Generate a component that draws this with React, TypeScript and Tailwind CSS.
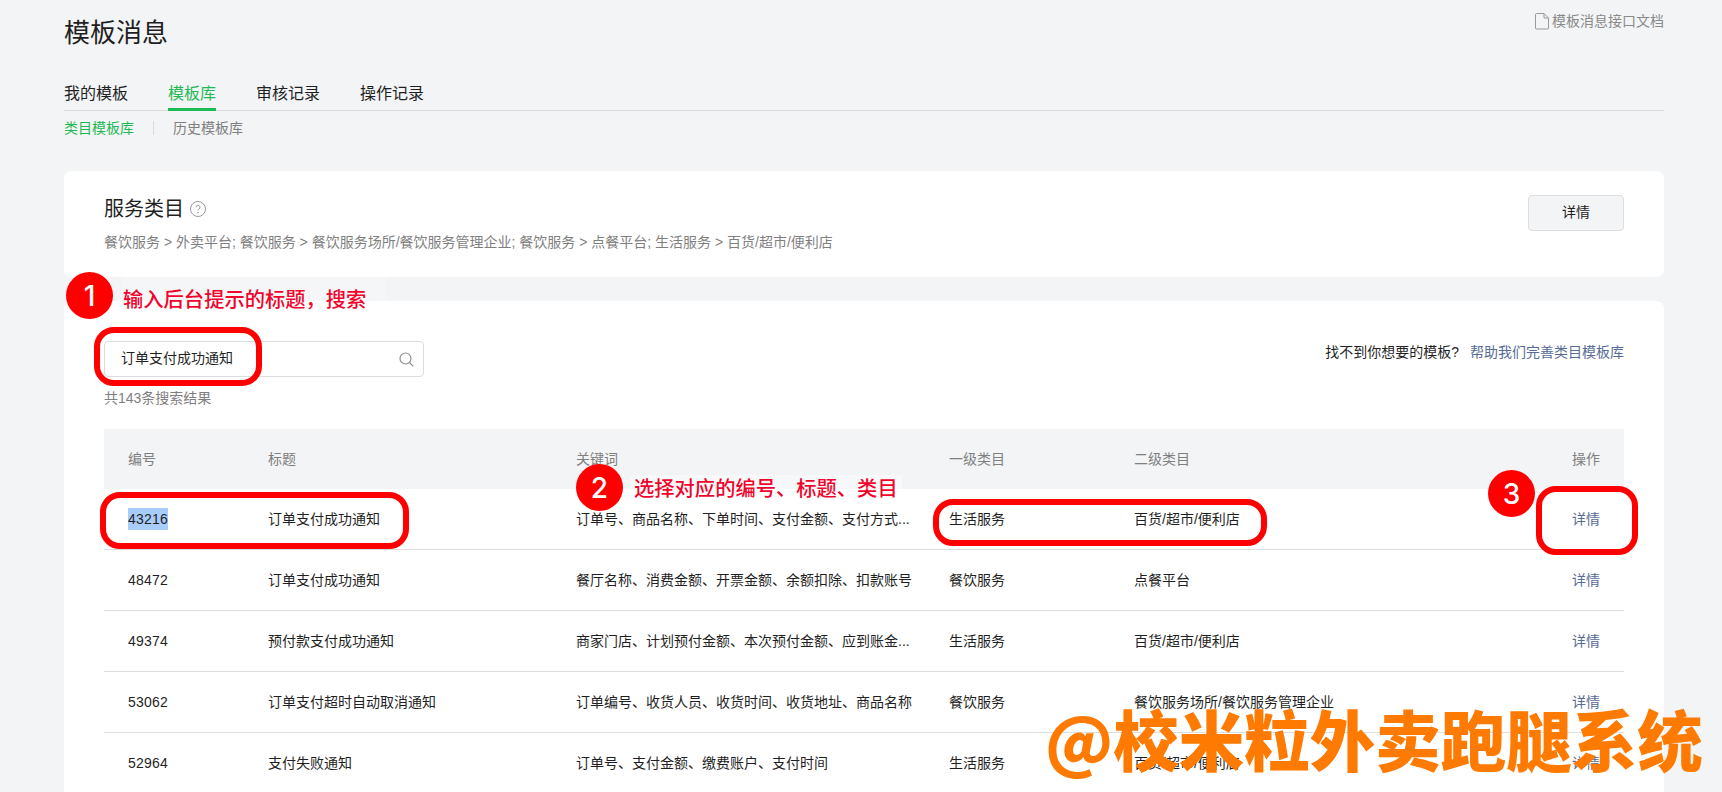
const FONT = { fontFamily: '"Liberation Sans", "Noto Sans CJK SC", sans-serif' };
const CJK = { fontFamily: '"Noto Sans CJK SC", "Noto Sans", sans-serif' };

const rows = [
  ["43216", "订单支付成功通知", "订单号、商品名称、下单时间、支付金额、支付方式...", "生活服务", "百货/超市/便利店"],
  ["48472", "订单支付成功通知", "餐厅名称、消费金额、开票金额、余额扣除、扣款账号", "餐饮服务", "点餐平台"],
  ["49374", "预付款支付成功通知", "商家门店、计划预付金额、本次预付金额、应到账金...", "生活服务", "百货/超市/便利店"],
  ["53062", "订单支付超时自动取消通知", "订单编号、收货人员、收货时间、收货地址、商品名称", "餐饮服务", "餐饮服务场所/餐饮服务管理企业"],
  ["52964", "支付失败通知", "订单号、支付金额、缴费账户、支付时间", "生活服务", "百货/超市/便利店"],
];

function Circle({ n, cls }: { n: string; cls: string }) {
  return (
    <div style={{ fontFamily: "Inter, sans-serif" }} className={`absolute w-[47px] h-[47px] rounded-full bg-[#fe0000] text-white flex items-center justify-center text-[28px] font-medium leading-none ${cls}`}>
      {n}
    </div>
  );
}

function Box({ cls }: { cls: string }) {
  return <div className={`absolute border-[6px] border-[#fe0000] ${cls}`} />;
}

export default function App() {
  return (
    <div style={FONT} className="relative h-[792px] overflow-hidden bg-[#f3f4f6] pl-16 pr-[58px] text-[14px] leading-5 text-[#1f1f1f]">
      <div className="flex h-[70px] justify-between">
        <h1 className="pt-[15px] text-[26px] leading-9 font-normal">模板消息</h1>
        <a className="flex h-4 mt-[13px] items-center gap-[3px] text-[#8a8a8a]">
          <svg width="14" height="17" viewBox="0 0 14 17" fill="none" stroke="#9a9a9a" strokeWidth="1">
            <path d="M1.5.5h7.5l4.500 4.500v10a1 1 0 0 1-1 1h-11a1 1 0 0 1-1-1v-13.500a1 1 0 0 1 1-1z" />
            <path d="M9 .5v4.500h4.500" />
          </svg>
          <span className="-mt-px">模板消息接口文档</span>
        </a>
      </div>

      <div className="flex h-[41px] gap-10 border-b border-[#d9dadc] text-[16px] leading-6">
        <span className="pt-[12px]">我的模板</span>
        <span className="h-[41px] pt-[12px] text-[#1fb955] border-b-[3px] border-[#1fb955]">模板库</span>
        <span className="pt-[12px]">审核记录</span>
        <span className="pt-[12px]">操作记录</span>
      </div>

      <div className="flex h-9 items-center pb-[2px] text-[#7f7f7f]">
        <span className="text-[#1fb955]">类目模板库</span>
        <span className="mx-[19px] h-[14px] w-px bg-[#d9dadc]" />
        <span>历史模板库</span>
      </div>

      <section className="mt-6 flex h-[106px] justify-between rounded-lg bg-white px-10 pt-6">
        <div>
          <div className="flex h-7 items-center gap-[6px] text-[20px] leading-7">
            <span className="-mt-px">服务类目</span>
            <svg width="16" height="16" viewBox="0 0 16 16" fill="none" stroke="#9a9a9a">
              <circle cx="8" cy="8" r="7.500" />
              <path d="M6 6.300a2 2 0 1 1 3 1.700c-.7.400-1 .8-1 1.600" />
              <circle cx="8" cy="11.700" r=".4" />
            </svg>
          </div>
          <p className="mt-[9px] text-[#7f7f7f]">餐饮服务 &gt; 外卖平台; 餐饮服务 &gt; 餐饮服务场所/餐饮服务管理企业; 餐饮服务 &gt; 点餐平台; 生活服务 &gt; 百货/超市/便利店</p>
        </div>
        <button className="h-9 w-24 rounded border border-[#dcdddf] bg-[#f3f4f6] pb-[2px] text-[#1f1f1f]">详情</button>
      </section>

      <section className="mt-6 h-[600px] rounded-lg bg-white px-10 pt-10">
        <div className="flex justify-between">
          <div className="flex h-9 w-[320px] items-center justify-between rounded border border-[#dcdddf] pl-4 pr-[9px]">
            <span className="-mt-[2px]">订单支付成功通知</span>
            <svg width="15" height="15" viewBox="0 0 15 15" fill="none" stroke="#8f8f8f" strokeWidth="1.200">
              <circle cx="6.500" cy="6.500" r="5.500" />
              <path d="M10.500 10.500l3.800 3.800" />
            </svg>
          </div>
          <div className="mt-px flex h-5 gap-[11px]">
            <span>找不到你想要的模板?</span>
            <a className="text-[#576b95]">帮助我们完善类目模板库</a>
          </div>
        </div>
        <p className="mt-[11px] text-[#7f7f7f]">共143条搜索结果</p>

        <div className="mt-[21px]">
          <div className="grid h-[60px] grid-cols-[140px_308px_373px_185px_1fr_52px] items-center bg-[#f3f4f6] pl-6 text-[#7f7f7f]">
            <span>编号</span>
            <span>标题</span>
            <span>关键词</span>
            <span>一级类目</span>
            <span>二级类目</span>
            <span>操作</span>
          </div>
          {rows.map((r, i) => (
            <div key={r[0]} className="grid h-[61px] grid-cols-[140px_308px_373px_185px_1fr_52px] items-center border-b border-[#dcdddf] pl-6">
              <span>{i === 0 ? <span className="bg-[#a8cdfb] py-[3px] tracking-[.2px]">{r[0]}</span> : <span className="tracking-[.2px]">{r[0]}</span>}</span>
              <span>{r[1]}</span>
              <span className="whitespace-nowrap">{r[2]}</span>
              <span>{r[3]}</span>
              <span>{r[4]}</span>
              <a className="text-[#576b95]">详情</a>
            </div>
          ))}
        </div>
      </section>

      <div className="absolute left-[123px] top-[277px] h-6 w-[264px] bg-[#f5f6f7]" />
      <div className="absolute left-[630px] top-[475px] h-[14px] w-[272px] bg-[#f7f8f9]" />

      <Circle n="1" cls="left-[66px] top-[272px]" />
      <div style={CJK} className="absolute left-[123px] top-[283px] text-[20.300px] leading-[30px] font-medium text-[#f0042c] whitespace-nowrap">输入后台提示的标题，搜索</div>
      <Box cls="left-[94px] top-[327px] w-[168px] h-[59px] rounded-[20px]" />

      <Circle n="2" cls="left-[576px] top-[464px]" />
      <div style={CJK} className="absolute left-[634px] top-[472px] text-[20.300px] leading-[30px] font-medium text-[#f0042c] whitespace-nowrap">选择对应的编号、标题、类目</div>

      <Box cls="left-[100px] top-[492px] w-[309px] h-[57px] rounded-[20px]" />
      <Box cls="left-[933px] top-[499px] w-[334px] h-[47px] rounded-[20px]" />

      <Circle n="3" cls="left-[1488px] top-[470px]" />
      <Box cls="left-[1536px] top-[486px] w-[102px] h-[69px] rounded-[20px]" />

      <div style={CJK} className="absolute left-[1045px] top-[695px] text-[65.500px] leading-[86px] font-black text-[#ff7a00] whitespace-nowrap">@校米粒外卖跑腿系统</div>
    </div>
  );
}
